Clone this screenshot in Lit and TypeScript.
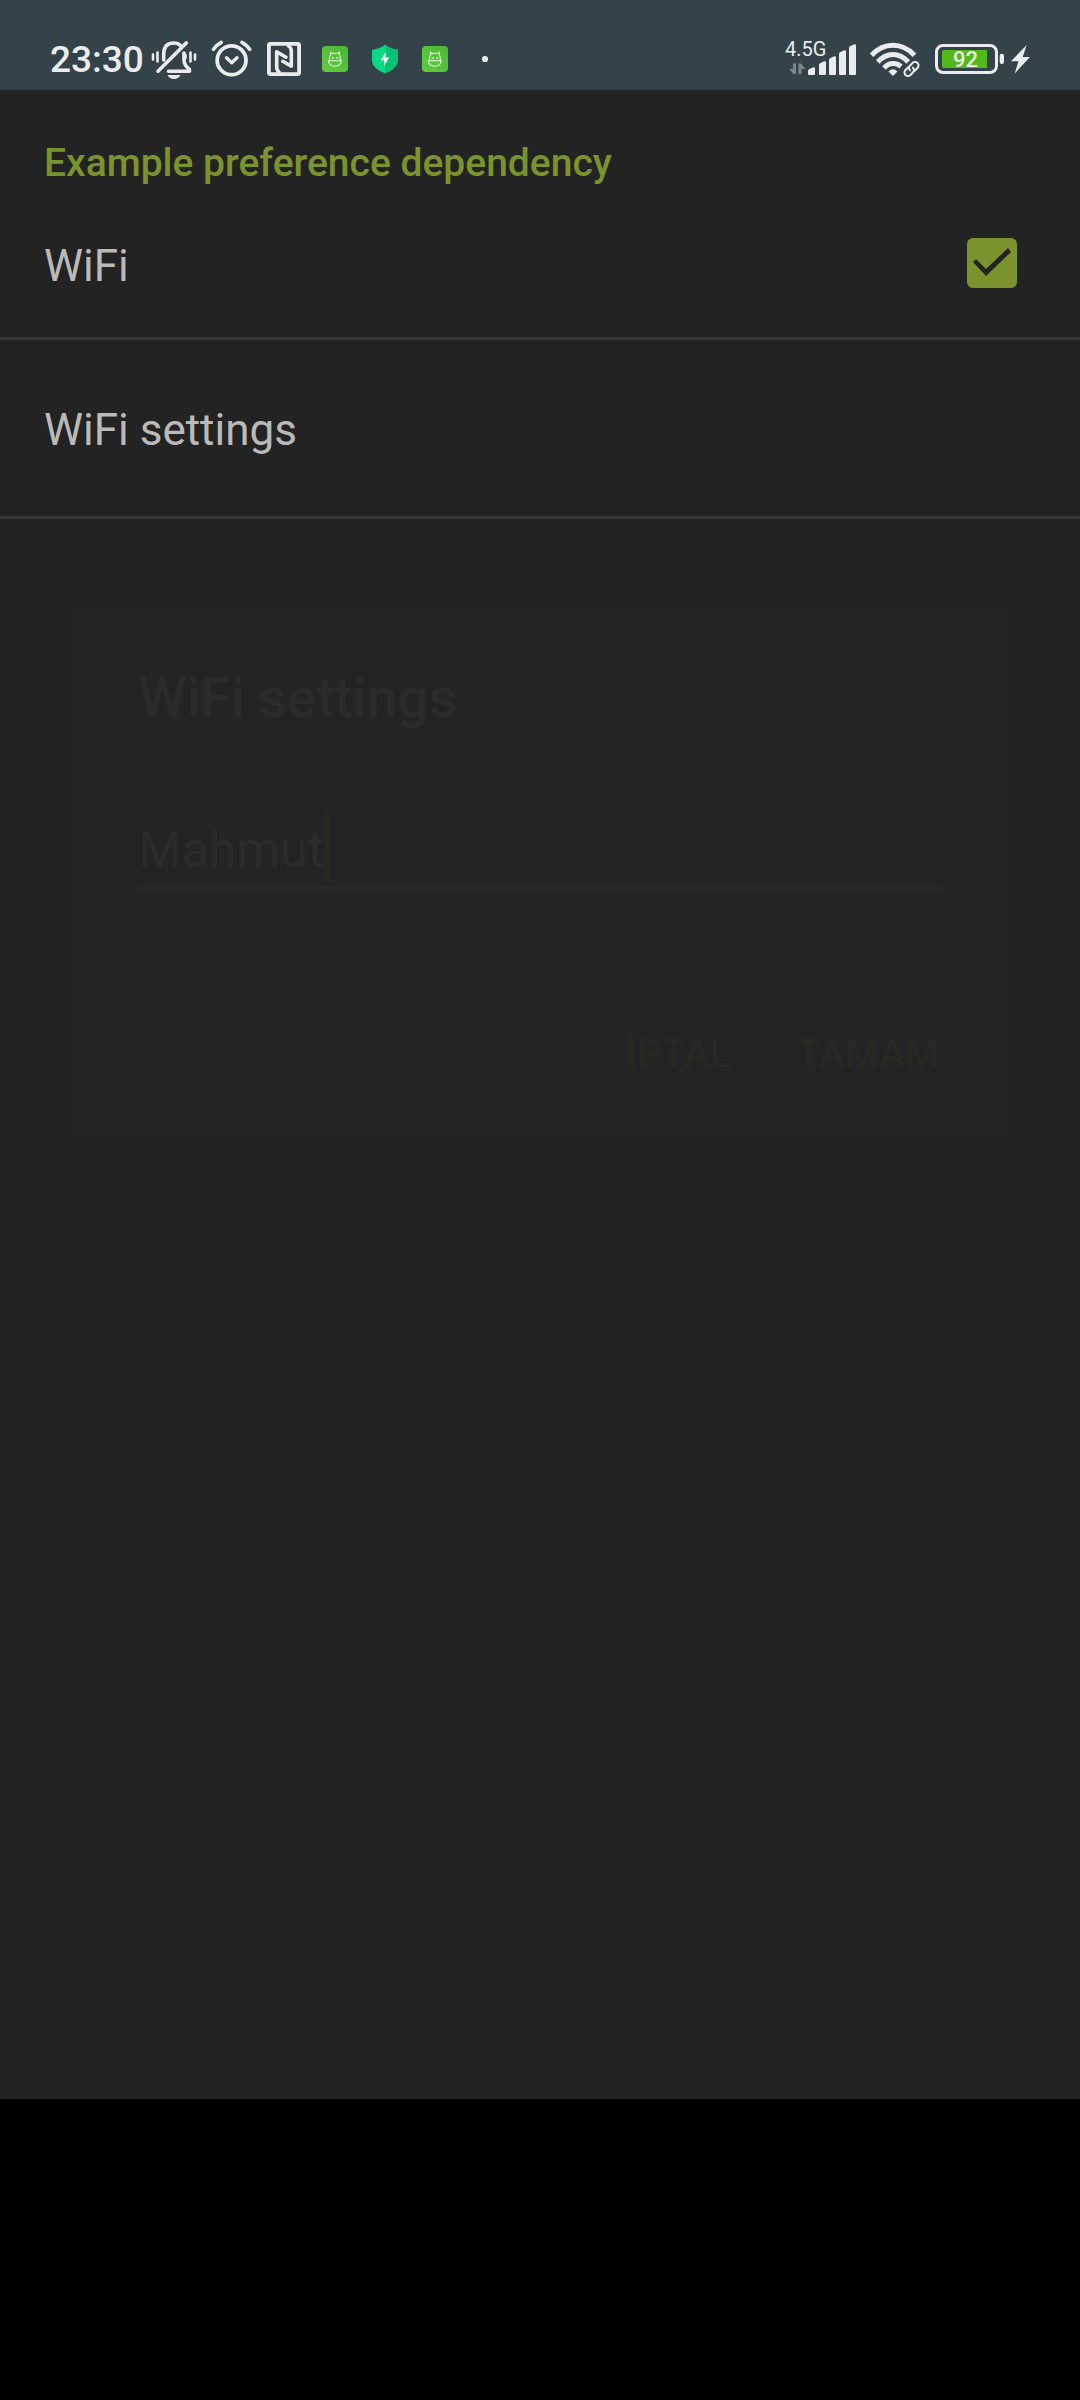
import { LitElement, html, svg, css } from "lit";
import { customElement, state } from "lit/decorators.js";

@customElement("status-bar")
class StatusBar extends LitElement {
  static styles = css`
    :host {
      display: block;
      background: #344249;
      color: #ebecee;
    }
    .bar {
      display: flex;
      justify-content: space-between;
      height: 60px;
      padding: 30px 48px 0 50px;
    }
    .group {
      display: flex;
      align-items: center;
    }
    .clock {
      font-size: 37px;
      line-height: 44px;
      font-weight: 500;
      margin-right: 7px;
    }
    .system {
      display: flex;
      gap: 14px;
    }
    .apps {
      display: flex;
      gap: 24px;
      margin-left: 21px;
    }
    .right {
      gap: 14px;
    }
    .dot {
      margin-left: 9px;
    }
    svg {
      display: block;
      font-family: Roboto, sans-serif;
    }
  `;

  private appIcon() {
    return html`<svg width="26" height="40" viewBox="0 -6 26 40" aria-hidden="true">
      <defs>
        <linearGradient id="leaf" x1="0" y1="1" x2="1" y2="0">
          <stop offset="0" stop-color="#62cb43" />
          <stop offset="1" stop-color="#4cb833" />
        </linearGradient>
      </defs>
      <rect y="0" width="26" height="26" rx="4" fill="url(#leaf)" />
      <g fill="none" stroke="#e9f8e2" stroke-width="1.1">
        <path d="M7.5 14.5Q6.8 11 8.5 9V6.3L10.5 7.6Q13 6.9 15.1 7.6L17.3 6.3V9Q18.9 11 18.3 14.5" />
        <path d="M6.3 14.7H19.3Q18.6 20.2 12.8 20.2Q7 20.2 6.3 14.7Z" />
      </g>
      <path d="M9.8 11h2v1.6h-2zM14.2 11h2v1.6h-2z" fill="#e9f8e2" />
    </svg>`;
  }

  render() {
    const bars = [
      [808, 67],
      [819, 61],
      [829, 56],
      [839, 50],
      [849, 44],
    ];
    return html`
      <header class="bar">
        <div class="group">
          <span class="clock">23:30</span>
          <div class="system">
            <svg width="46" height="40" viewBox="151 40 46 40" fill="none" stroke="#ebecee" stroke-linecap="round" aria-label="Silent">
              <g stroke-width="2.6">
                <path d="M153 54.5v5M157.5 52.5v9M185.5 55v3M190.5 52.5v9M195 54.5v5" />
              </g>
              <g stroke-width="3.6" stroke-linejoin="round">
                <path d="M163.7 60V54Q163.7 43 174 43Q178 43 180.5 45.5" />
                <path d="M158 71.2L186.3 43" />
                <path d="M184 53V60Q184 65 189.5 69.5V71.3H168.5" />
              </g>
              <path d="M167.5 75H180.5Q178.5 79 174 79Q169.5 79 167.5 75Z" fill="#ebecee" stroke="none" />
            </svg>
            <svg width="42" height="40" viewBox="210 40 42 40" fill="none" stroke="#ebecee" stroke-linecap="round" stroke-linejoin="round" aria-label="Alarm">
              <circle cx="230.6" cy="60.3" r="14.4" stroke-width="3.8" />
              <path d="M225.5 57.8L230.8 62.8L236 57.8" stroke-width="3.4" />
              <path d="M212.5 49.3Q215.5 45 220.2 42.4M241 42.4Q245.7 45 248.7 49.3" stroke-width="3.6" />
            </svg>
            <svg width="34" height="40" viewBox="266 40 34 40" fill="none" stroke="#ebecee" aria-label="NFC">
              <rect x="267.9" y="43.9" width="30.2" height="30.2" rx="1.5" stroke-width="3.8" />
              <g stroke-width="3.6" stroke-linejoin="round" stroke-linecap="round">
                <path d="M278 72Q275.7 70.5 275.7 67V51.8L285 57.2" />
                <path d="M287.5 46Q290.3 47.5 290.3 51V66.3L281.8 61.3" />
              </g>
            </svg>
          </div>
          <div class="apps">
            ${this.appIcon()}
            <svg width="26" height="40" viewBox="371 40 26 40" aria-label="Security">
              <path d="M384 44.7Q390 49 397 49.8V61Q396 69 384 73.3Q372 69 371 61V49.8Q378 49 384 44.7Z" fill="#08d984" />
              <path d="M384 44.7Q390 49 397 49.8V61Q396 69 384 73.3Z" fill="#06c172" />
              <path d="M384.7 52L379.7 60.3H383.3L383 66L388.2 57.6H384.6Z" fill="#f4fff9" />
            </svg>
            ${this.appIcon()}
            <svg class="dot" width="8" height="40" viewBox="480 40 8 40" aria-hidden="true">
              <circle cx="484" cy="59" r="3.1" fill="#ebecee" />
            </svg>
          </div>
        </div>
        <div class="group right">
          <svg width="72" height="60" viewBox="784 30 72 60" fill="#ebecee" aria-label="Mobile signal">
            <text x="785" y="56" font-size="20">4.5G</text>
            <path d="M796 63.5V74H793.6L789 69H793V63.5ZM798.4 63.5H801L805.5 69H801.5V74H798.4Z" fill="#7d868b" />
            ${bars.map(
              ([x, y]) => svg`<path d="M${x} ${y + 4}Q${x} ${y + 2.5} ${x + 1.5} ${y + 2}L${x + 5.3} ${y + 0.2}Q${x + 7} ${y} ${x + 7} ${y + 1.5}V74Q${x + 7} 75 ${x + 6} 75H${x + 1}Q${x} 75 ${x} 74Z" />`,
            )}
          </svg>
          <svg width="50" height="40" viewBox="870 40 50 40" fill="none" stroke="#ebecee" aria-label="Wi-Fi">
            <g stroke-width="5">
              <path d="M871.5 55.2Q881 45.2 893 45.2Q905 45.2 914.5 55.2" />
              <path d="M877.8 62Q884.5 54.5 893 54.5Q901.5 54.5 908.2 62" />
              <path d="M884 68Q888 63.6 893 63.6Q897.5 63.6 901 66.5" />
            </g>
            <path d="M888.5 71.5Q893 67 897.5 71.5L893 76Z" fill="#ebecee" stroke="none" />
            <g transform="rotate(-45 911.5 69)" stroke-width="2" stroke-linecap="round">
              <path d="M910.5 65.5H906.5a3.5 3.5 0 0 0 0 7H910a3.5 3.5 0 0 0 3.5-3.5" />
              <path d="M912.5 72.5H916.5a3.5 3.5 0 0 0 0-7H913a3.5 3.5 0 0 0-3.5 3.5" />
            </g>
          </svg>
          <svg width="98" height="40" viewBox="934 40 98 40" fill="#ebecee" aria-label="Battery">
            <rect x="936.5" y="45.5" width="60" height="27" rx="6.5" fill="none" stroke="#ebecee" stroke-width="3" />
            <path d="M944 50H987V68H944Q942 68 942 66V52Q942 50 944 50Z" fill="#53b91b" />
            <text x="953" y="67" font-size="22" font-weight="500">92</text>
            <rect x="999.7" y="53.7" width="4.3" height="10.3" rx="2" />
            <path d="M1026.7 45L1011 61.2H1018.5L1014.7 73.5L1030 57H1022.7Z" />
          </svg>
        </div>
      </header>
    `;
  }
}

@customElement("app-root")
class AppRoot extends LitElement {
  static styles = css`
    :host {
      display: flex;
      flex-direction: column;
      min-height: 100vh;
      background: #232323;
      font-family: Roboto, sans-serif;
    }
    main {
      flex: 1;
    }
    h1,
    h2 {
      margin: 0;
      font-weight: 500;
    }
    h1 {
      padding: 51px 44px 0;
      font-size: 39px;
      line-height: 44px;
      color: #7a932c;
    }
    .row {
      display: flex;
      align-items: flex-start;
      justify-content: space-between;
      box-sizing: border-box;
      width: 100%;
      border: 0;
      border-bottom: 3px solid #363636;
      background: none;
      font: inherit;
      font-size: 44px;
      line-height: 56px;
      color: #bababa;
      text-align: left;
    }
    .toggle {
      padding: 53px 63px 43px 44px;
    }
    .link {
      padding: 62px 44px 58px;
    }
    .check {
      appearance: none;
      width: 50px;
      height: 50px;
      margin: 0;
      border: 3px solid #7a932c;
      border-radius: 6px;
    }
    .check:checked {
      border: 0;
      background: #7a932c;
    }
    .check:checked::before {
      content: "";
      display: block;
      height: 50px;
      background: #232323;
      clip-path: polygon(6px 24px, 9px 21px, 19px 31px, 41px 10px, 44px 14px, 19px 38px);
    }
    .dialog {
      margin: 89px 73px 0;
      padding: 58px 65px 59px;
      border-radius: 6px;
      background: #242424;
      color: #2b2b2c;
    }
    h2 {
      font-size: 55px;
      line-height: 64px;
    }
    .field {
      display: flex;
      margin-top: 84px;
      padding-bottom: 5px;
      border-bottom: 6px solid #282824;
    }
    .name {
      field-sizing: content;
      height: 67px;
      padding: 4px 0 0;
      border: 0;
      outline: 0;
      box-sizing: border-box;
      background: none;
      font: inherit;
      font-size: 50px;
      color: inherit;
    }
    .cursor {
      width: 6px;
      background: #282824;
    }
    .actions {
      display: flex;
      justify-content: flex-end;
      gap: 66px;
      margin-top: 138px;
      padding-right: 3px;
    }
    .action {
      padding: 0;
      border: 0;
      background: none;
      font: inherit;
      font-size: 39px;
      line-height: 48px;
      font-weight: 500;
      color: #282824;
    }
    .nav {
      height: 301px;
      background: #000;
    }
  `;

  @state() private wifi = true;

  private toggle(e: Event) {
    this.wifi = (e.target as HTMLInputElement).checked;
  }

  render() {
    return html`
      <status-bar></status-bar>
      <main>
        <h1>Example preference dependency</h1>
        <label class="row toggle">
          <span>WiFi</span>
          <input class="check" type="checkbox" .checked=${this.wifi} @change=${this.toggle} />
        </label>
        <button class="row link" type="button">WiFi settings</button>
        <section class="dialog" role="dialog" aria-labelledby="dialog-title">
          <h2 id="dialog-title">WiFi settings</h2>
          <div class="field">
            <input class="name" type="text" aria-labelledby="dialog-title" value="Mahmut" />
            <span class="cursor"></span>
          </div>
          <div class="actions">
            <button class="action" type="button">İPTAL</button>
            <button class="action" type="button">TAMAM</button>
          </div>
        </section>
      </main>
      <div class="nav"></div>
    `;
  }
}
